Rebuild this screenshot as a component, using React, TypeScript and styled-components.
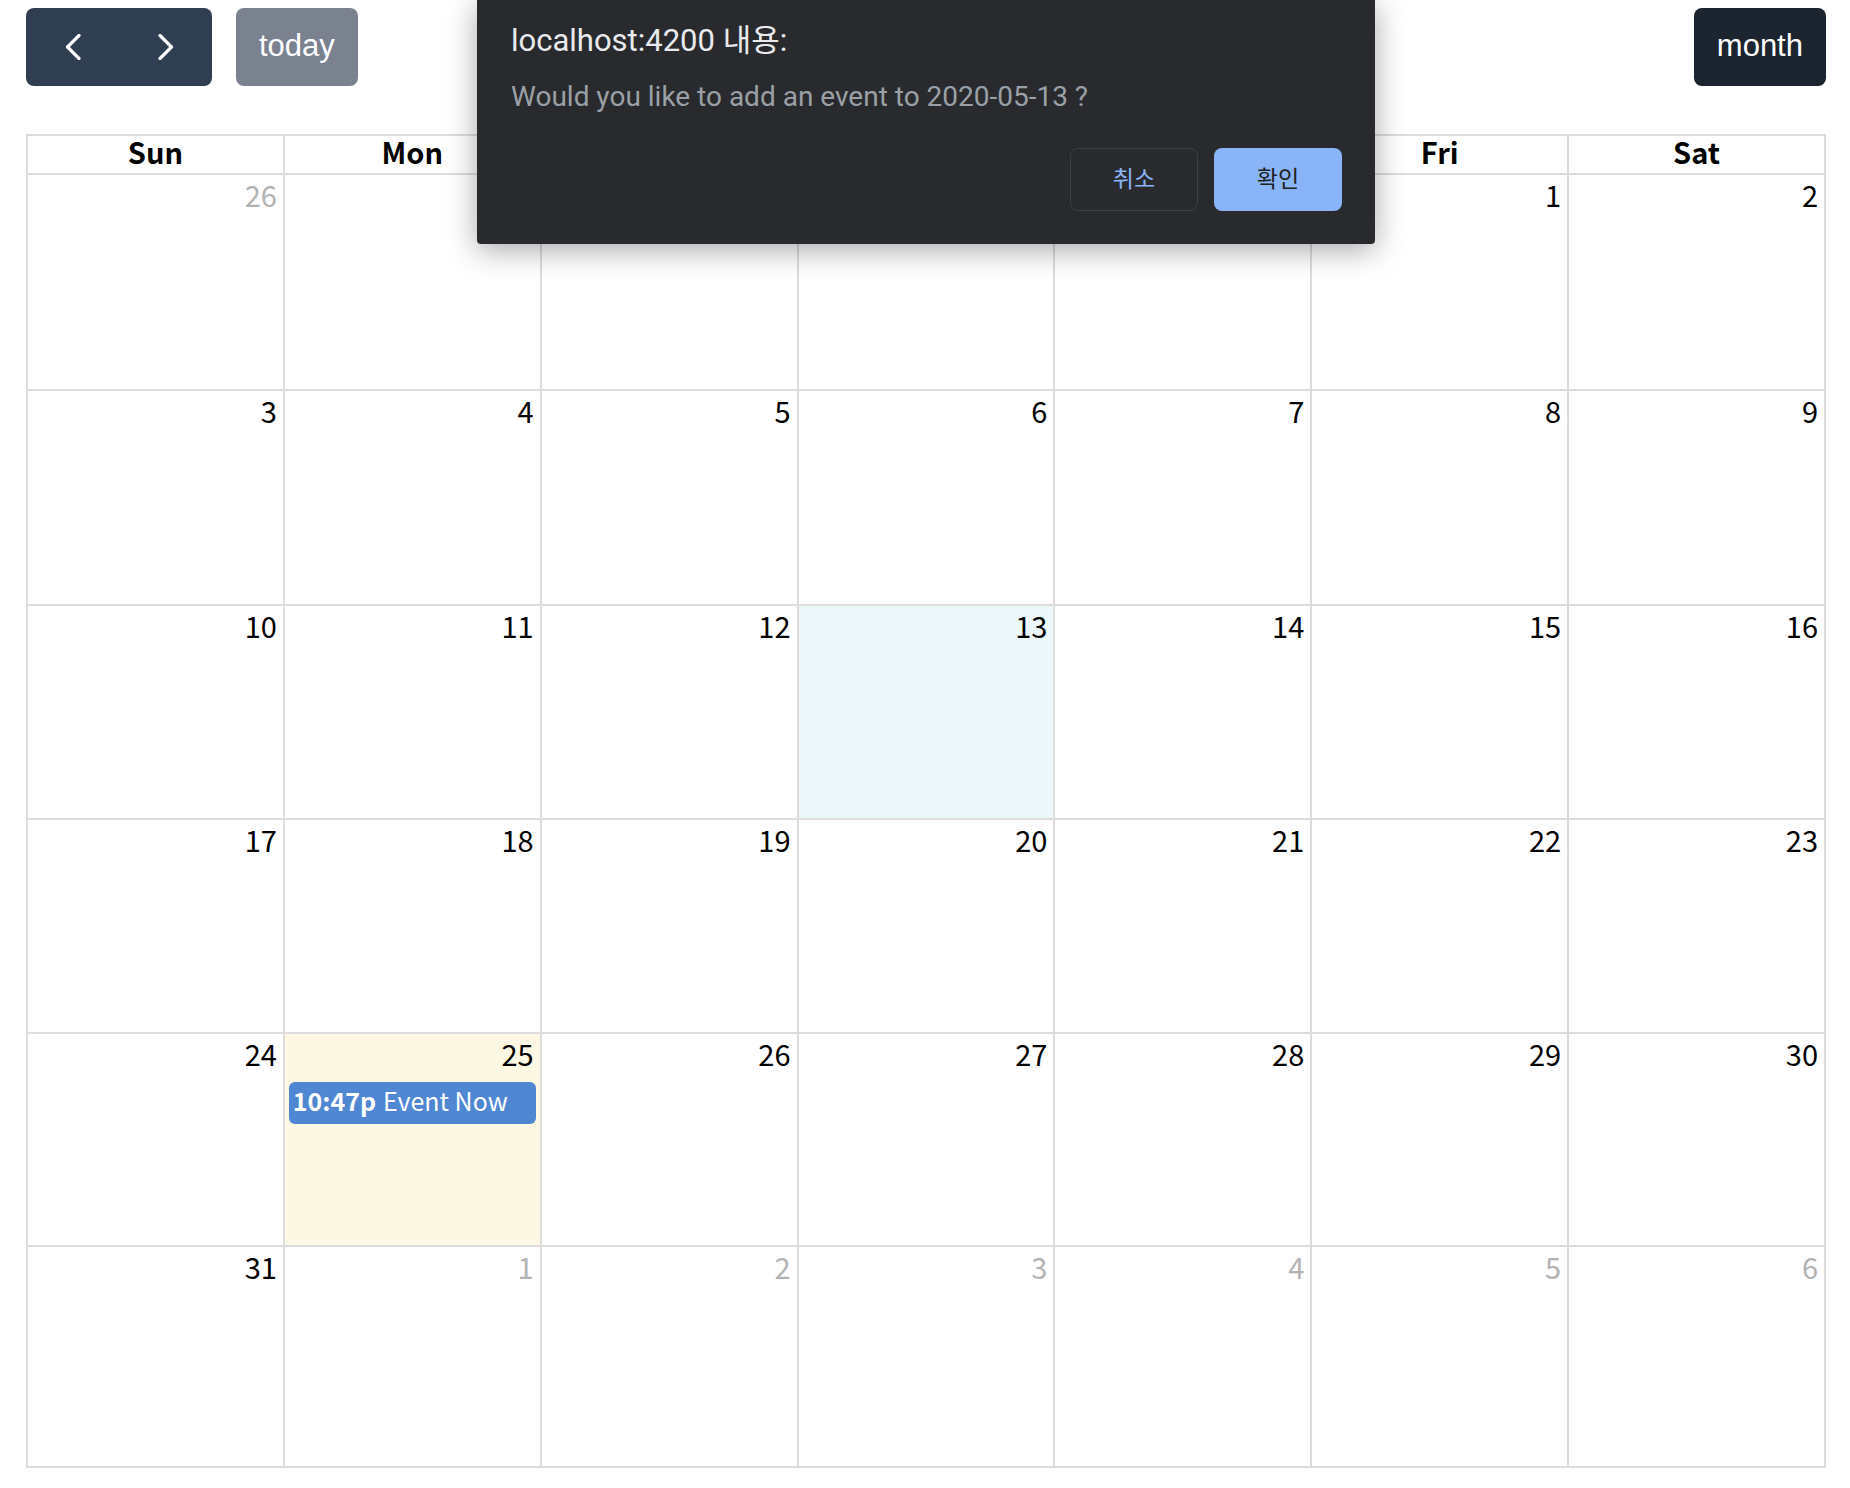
import React from "react";
import styled, { createGlobalStyle } from "styled-components";

const GlobalStyle = createGlobalStyle`
  * {
    box-sizing: border-box;
  }
  html,
  body {
    margin: 0;
    padding: 0;
    background: #ffffff;
  }
  body {
    font-family: "Noto Sans CJK KR", "Noto Sans", sans-serif;
    color: #000000;
  }
`;

const Page = styled.div`
  position: relative;
  width: 1850px;
  min-height: 1488px;
  padding: 8px 24px 0 26px;
`;

const Toolbar = styled.div`
  display: flex;
  justify-content: space-between;
  align-items: center;
  height: 78px;
  margin-bottom: 48px;
`;

const ToolbarChunk = styled.div`
  display: flex;
  align-items: center;
  gap: 24px;
`;

const ButtonGroup = styled.div`
  display: flex;
`;

const NavButton = styled.button<{ $first?: boolean }>`
  width: 93px;
  height: 78px;
  border: none;
  background: #2f3e50;
  color: #ffffff;
  display: flex;
  align-items: center;
  justify-content: center;
  border-radius: ${(p) => (p.$first ? "8px 0 0 8px" : "0 8px 8px 0")};
  padding: 0;
`;

const TextButton = styled.button<{ $active?: boolean }>`
  height: 78px;
  padding: 0 23px 2px;
  border: none;
  border-radius: 8px;
  font-family: "Liberation Sans", Arial, sans-serif;
  font-size: 31px;
  color: #ffffff;
  background: ${(p) => (p.$active ? "#1c242f" : "#7a8290")};
`;

const Title = styled.h2`
  margin: 0;
  font-size: 50px;
  font-weight: 700;
`;

const Calendar = styled.div`
  display: grid;
  grid-template-columns: repeat(7, 1fr);
  grid-template-rows: 37px 214px 213px 212px 212px 211px 219px;
  gap: 2px;
  background: #dddddd;
  border: 2px solid #dddddd;
`;

const HeaderCell = styled.div`
  background: #ffffff;
  text-align: center;
  font-size: 29px;
  font-weight: 700;
  line-height: 30px;
`;

const DayCell = styled.div<{ $tone?: "today" | "selected" }>`
  display: flex;
  flex-direction: column;
  background: ${(p) =>
    p.$tone === "today" ? "#fcf8e3" : p.$tone === "selected" ? "#ecf7fa" : "#ffffff"};
`;

const DayNumber = styled.div<{ $muted?: boolean }>`
  padding: 2px 6px 0;
  text-align: right;
  font-size: 29px;
  line-height: 34px;
  color: ${(p) => (p.$muted ? "#b3b3b3" : "#000000")};
`;

const EventBar = styled.div`
  margin: 12px 4px 0;
  height: 42px;
  padding: 3px 4px 0;
  border-radius: 6px;
  background: #4f87d2;
  color: #ffffff;
  font-size: 25px;
  line-height: 30px;
  white-space: nowrap;
  overflow: hidden;
`;

const EventTime = styled.span`
  font-weight: 700;
  margin-right: 7px;
`;

const Dialog = styled.div`
  position: absolute;
  top: 0;
  left: 477px;
  width: 898px;
  height: 244px;
  display: flex;
  flex-direction: column;
  padding: 20px 33px 33px 34px;
  background: #292a2d;
  border-radius: 0 0 4px 4px;
  box-shadow: 0 6px 30px rgba(0, 0, 0, 0.35);
`;

const DialogTitle = styled.div`
  font-family: Roboto, "Noto Sans CJK KR", sans-serif;
  font-size: 31px;
  line-height: 34px;
  color: #e8eaed;
  margin-top: 4px;
`;

const DialogMessage = styled.div`
  margin-top: 22px;
  font-family: Roboto, "Noto Sans CJK KR", sans-serif;
  font-size: 28px;
  line-height: 34px;
  color: #9aa0a6;
`;

const DialogActions = styled.div`
  margin-top: auto;
  display: flex;
  justify-content: flex-end;
  gap: 16px;
`;

const DialogButton = styled.button<{ $primary?: boolean }>`
  width: 128px;
  height: 63px;
  padding: 0 0 6px;
  border-radius: 8px;
  font-family: "Noto Sans CJK KR", sans-serif;
  font-size: 23px;
  border: ${(p) => (p.$primary ? "none" : "1px solid #3c4043")};
  background: ${(p) => (p.$primary ? "#8ab4f8" : "transparent")};
  color: ${(p) => (p.$primary ? "#202124" : "#8ab4f8")};
`;

const Chevron = ({ dir }: { dir: "left" | "right" }) => (
  <svg width="16" height="26" viewBox="0 0 16 26" fill="none">
    <path
      d={dir === "left" ? "M14 1.5 L2.5 13 L14 24.5" : "M2 1.5 L13.5 13 L2 24.5"}
      stroke="#ffffff"
      strokeWidth="3.2"
      strokeLinecap="round"
      strokeLinejoin="round"
    />
  </svg>
);

const weekdays = ["Sun", "Mon", "Tue", "Wed", "Thu", "Fri", "Sat"];

type Day = { n: number; muted?: boolean; tone?: "today" | "selected"; event?: boolean };

const buildDays = (): Day[] => {
  const days: Day[] = [];
  for (let d = 26; d <= 30; d++) days.push({ n: d, muted: true });
  for (let d = 1; d <= 31; d++) {
    days.push({
      n: d,
      tone: d === 25 ? "today" : d === 13 ? "selected" : undefined,
      event: d === 25,
    });
  }
  for (let d = 1; d <= 6; d++) days.push({ n: d, muted: true });
  return days;
};

export default function App() {
  const days = buildDays();
  return (
    <Page>
      <GlobalStyle />
      <Toolbar>
        <ToolbarChunk>
          <ButtonGroup>
            <NavButton $first aria-label="prev">
              <Chevron dir="left" />
            </NavButton>
            <NavButton aria-label="next">
              <Chevron dir="right" />
            </NavButton>
          </ButtonGroup>
          <TextButton>today</TextButton>
        </ToolbarChunk>
        <Title>May 2020</Title>
        <ToolbarChunk>
          <TextButton $active>month</TextButton>
        </ToolbarChunk>
      </Toolbar>
      <Calendar>
        {weekdays.map((w) => (
          <HeaderCell key={w}>{w}</HeaderCell>
        ))}
        {days.map((day, i) => (
          <DayCell key={i} $tone={day.tone}>
            <DayNumber $muted={day.muted}>{day.n}</DayNumber>
            {day.event && (
              <EventBar>
                <EventTime>10:47p</EventTime>Event Now
              </EventBar>
            )}
          </DayCell>
        ))}
      </Calendar>
      <Dialog>
        <DialogTitle>localhost:4200 내용:</DialogTitle>
        <DialogMessage>Would you like to add an event to 2020-05-13 ?</DialogMessage>
        <DialogActions>
          <DialogButton>취소</DialogButton>
          <DialogButton $primary>확인</DialogButton>
        </DialogActions>
      </Dialog>
    </Page>
  );
}
